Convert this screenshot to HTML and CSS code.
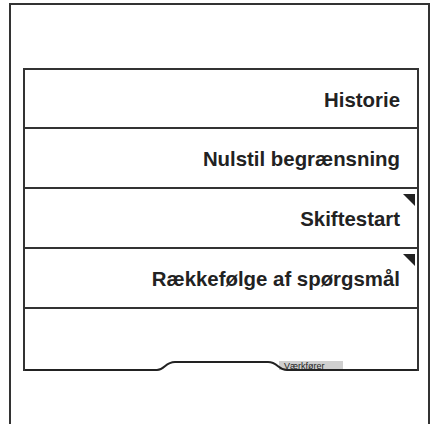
FILE: index.html
```html
<!DOCTYPE html>
<html>
  <head>
    <title>Menu</title>
    <link rel="stylesheet" href="styles.css">
  </head>
  <body>
    <div class="frame">
      <div class="menu">
        <div class="item">Historie</div>
        <div class="item">Nulstil begrænsning</div>
        <div class="item more">Skiftestart</div>
        <div class="item more">Rækkefølge af spørgsmål</div>
        <div class="item empty"></div>
        <svg class="tabline" width="392" height="10" viewBox="0 0 392 10">
          <rect x="254" y="0" width="64" height="9" fill="#cfcfcf"/>
          <text x="259" y="7.5" class="tablabel">Værkfører</text>
          <path d="M0 9 H132 C140 9 140 1 150 1 H243 C253 1 253 9 262 9 H392" fill="none" stroke="#222" stroke-width="2"/>
        </svg>
      </div>
    </div>
  </body>
</html>
```

FILE: styles.css
```css
html, body { margin: 0; background: #fff; }
body { font-family: "Liberation Sans", Arial, sans-serif; color: #222; }
.frame { margin: 3px 4px 0 9px; height: 440px; border: 2px solid #333; border-bottom: none; box-sizing: border-box; padding: 63px 9px 0 12px; }
.menu { border: 2px solid #333; border-bottom: none; display: flex; flex-direction: column; }
.item { position: relative; height: 60px; box-sizing: border-box; border-bottom: 2px solid #333; display: flex; align-items: center; justify-content: flex-end; padding: 3px 17px 0 0; font-size: 20.4px; font-weight: bold; }
.item:first-child { height: 59px; }
.item.more::after { content: ""; position: absolute; top: 5px; right: 2px; width: 0; height: 0; border-top: 12px solid #222; border-left: 12px solid transparent; }
.item.empty { height: 52px; border-bottom: none; }
.tabline { display: block; }
.tablabel { font-family: "Liberation Sans", Arial, sans-serif; font-size: 9px; fill: #222; }
```
